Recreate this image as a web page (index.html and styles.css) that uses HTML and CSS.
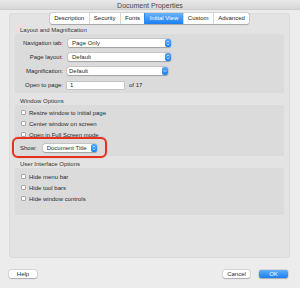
FILE: index.html
```html
<!DOCTYPE html>
<html lang="en">
<head>
  <meta charset="UTF-8">
  <title>Document Properties</title>
  <link rel="stylesheet" href="styles.css">
</head>
<body>
  <div class="titlebar">Document Properties</div>

  <div class="panel">
    <div class="tabs">
      <div class="tabs-inner">
        <div class="tab">Description</div>
        <div class="tab">Security</div>
        <div class="tab">Fonts</div>
        <div class="tab active">Initial View</div>
        <div class="tab">Custom</div>
        <div class="tab">Advanced</div>
      </div>
    </div>

    <!-- Layout and Magnification -->
    <div class="group-title first">Layout and Magnification</div>
    <div class="group layout">
      <div class="form-row">
        <div class="form-label">Navigation tab:</div>
        <div class="popup">
          <span class="popup-text">Page Only</span>
          <span class="stepper"><svg width="6" height="8" viewBox="0 0 6 8"><path d="M1.8 3.3 L3 2.1 L4.2 3.3 M1.8 4.7 L3 5.9 L4.2 4.7" fill="none" stroke="#fff" stroke-width="0.7"/></svg></span>
        </div>
      </div>
      <div class="form-row">
        <div class="form-label">Page layout:</div>
        <div class="popup">
          <span class="popup-text">Default</span>
          <span class="stepper"><svg width="6" height="8" viewBox="0 0 6 8"><path d="M1.8 3.3 L3 2.1 L4.2 3.3 M1.8 4.7 L3 5.9 L4.2 4.7" fill="none" stroke="#fff" stroke-width="0.7"/></svg></span>
        </div>
      </div>
      <div class="form-row">
        <div class="form-label">Magnification:</div>
        <div class="popup combo">
          <span class="popup-text">Default</span>
          <span class="stepper"><svg width="6" height="8" viewBox="0 0 6 8"><path d="M1.8 3.4 L3 4.6 L4.2 3.4" fill="none" stroke="#fff" stroke-width="0.7"/></svg></span>
        </div>
      </div>
      <div class="form-row">
        <div class="form-label">Open to page:</div>
        <div class="field">1</div>
        <div class="suffix">of 17</div>
      </div>
    </div>

    <!-- Window Options -->
    <div class="group-title">Window Options</div>
    <div class="group window">
      <div class="check-row"><span class="box"></span>Resize window to initial page</div>
      <div class="check-row"><span class="box"></span>Center window on screen</div>
      <div class="check-row"><span class="box"></span>Open in Full Screen mode</div>
      <div class="show-row">
        <span>Show:</span>
        <div class="popup small">
          <span class="popup-text">Document Title</span>
          <span class="stepper"><svg width="6" height="8" viewBox="0 0 6 8"><path d="M1.8 3.3 L3 2.1 L4.2 3.3 M1.8 4.7 L3 5.9 L4.2 4.7" fill="none" stroke="#fff" stroke-width="0.7"/></svg></span>
        </div>
      </div>
    </div>

    <!-- User Interface Options -->
    <div class="group-title">User Interface Options</div>
    <div class="group ui">
      <div class="check-row"><span class="box"></span>Hide menu bar</div>
      <div class="check-row"><span class="box"></span>Hide tool bars</div>
      <div class="check-row"><span class="box"></span>Hide window controls</div>
    </div>
  </div>

  <div class="footer">
    <div class="btn help">Help</div>
    <div class="btn cancel">Cancel</div>
    <div class="btn ok">OK</div>
  </div>
</body>
</html>
```

FILE: styles.css
```css
body {
  margin: 0;
  width: 300px;
  height: 288px;
  overflow: hidden;
  background: #ececec;
  font-family: "Liberation Sans", Arial, sans-serif;
  font-size: 6px;
  color: #2b2b2b;
}
.titlebar {
  height: 10px;
  line-height: 11px;
  box-sizing: border-box;
  text-align: center;
  font-size: 7px;
  color: #4a4a4a;
  background: linear-gradient(#e9e9e9, #d7d7d7);
  border-bottom: 1px solid #cdcdcd;
}
.panel {
  margin: 9px 10px 0 9px;
  height: 245px;
  box-sizing: border-box;
  padding: 0 6px;
  background: #e3e3e3;
  border-radius: 3px;
  box-shadow: inset 0 0 0 1px rgba(0, 0, 0, 0.03);
}
.tabs {
  display: flex;
  justify-content: center;
  margin-top: -6px;
  height: 11px;
}
.tabs-inner {
  display: flex;
  background: #fff;
  border-radius: 2px;
  box-shadow: 0 0 0 0.5px rgba(0, 0, 0, 0.18), 0 0.5px 1px rgba(0, 0, 0, 0.2);
}
.tab {
  padding: 0 4.3px;
  line-height: 11px;
  border-left: 1px solid #d6d6d6;
  color: #222;
}
.tab:first-child {
  border-left: none;
}
.tab.active {
  background: linear-gradient(#6ab2fa, #1b7ff2);
  color: #fff;
  border-left-color: #2a86f2;
}
.group-title {
  height: 7px;
  line-height: 7px;
  padding-left: 5px;
  margin-top: 5px;
  color: #333;
}
.group-title.first {
  margin-top: 3px;
}
.group {
  background: #dbdbdb;
  border-radius: 2px;
}
.group.layout {
  padding: 2px 0 1px;
}
.group.window {
  padding-top: 2px;
}
.group.ui {
  padding: 3px 0 11px;
}
.form-row {
  display: flex;
  align-items: center;
  height: 14px;
}
.form-label {
  flex: none;
  width: 48px;
  text-align: right;
}
.popup {
  display: flex;
  margin-left: 5px;
  width: 103px;
  height: 8px;
  background: #fff;
  border-radius: 2px;
  box-shadow: 0 0 0 0.5px rgba(0, 0, 0, 0.16), 0 0.5px 1px rgba(0, 0, 0, 0.2);
}
.popup.combo {
  margin-left: 4px;
  width: 101px;
}
.popup.combo .popup-text {
  padding-left: 2px;
}
.popup.small {
  margin-left: 6px;
  width: 54px;
}
.popup-text {
  flex: 1;
  padding-left: 4px;
  line-height: 8px;
  white-space: nowrap;
}
.stepper {
  flex: none;
  width: 6px;
  height: 8px;
  background: linear-gradient(#5da9f8, #1c7ef2);
  border-radius: 2px;
}
.stepper svg {
  display: block;
}
.field {
  margin-left: 4px;
  width: 57px;
  height: 7px;
  line-height: 7px;
  padding-left: 3px;
  box-sizing: border-box;
  background: #fff;
  box-shadow: 0 0 0 0.5px rgba(0, 0, 0, 0.2);
}
.suffix {
  margin-left: 5px;
}
.check-row {
  display: flex;
  align-items: center;
  height: 11px;
  padding-left: 6px;
}
.box {
  width: 5px;
  height: 5px;
  margin-right: 3px;
  box-sizing: border-box;
  background: #fff;
  border: 0.5px solid #a8a8a8;
  border-radius: 1px;
}
.show-row {
  position: relative;
  display: flex;
  align-items: center;
  height: 16px;
  padding-left: 5px;
}
/* red annotation ring around the Show row */
.show-row::after {
  content: "";
  position: absolute;
  left: -3px;
  top: -3px;
  width: 95px;
  height: 21px;
  box-sizing: border-box;
  border: 2.5px solid #e5321e;
  border-radius: 6px;
  box-shadow: 0 0 1px rgba(200, 20, 0, 0.6);
}
.footer {
  display: flex;
  margin-top: 12px;
  padding: 0 12px 0 9px;
}
.btn {
  height: 8px;
  line-height: 8px;
  text-align: center;
  background: #fff;
  border-radius: 2px;
  box-shadow: 0 0 0 0.5px rgba(0, 0, 0, 0.15), 0 0.5px 1px rgba(0, 0, 0, 0.2);
}
.help {
  width: 28px;
}
.cancel {
  margin-left: auto;
  width: 27px;
}
.ok {
  margin-left: 9px;
  width: 29px;
  color: #fff;
  background: linear-gradient(#62aefa, #1a7ef2);
}
```
